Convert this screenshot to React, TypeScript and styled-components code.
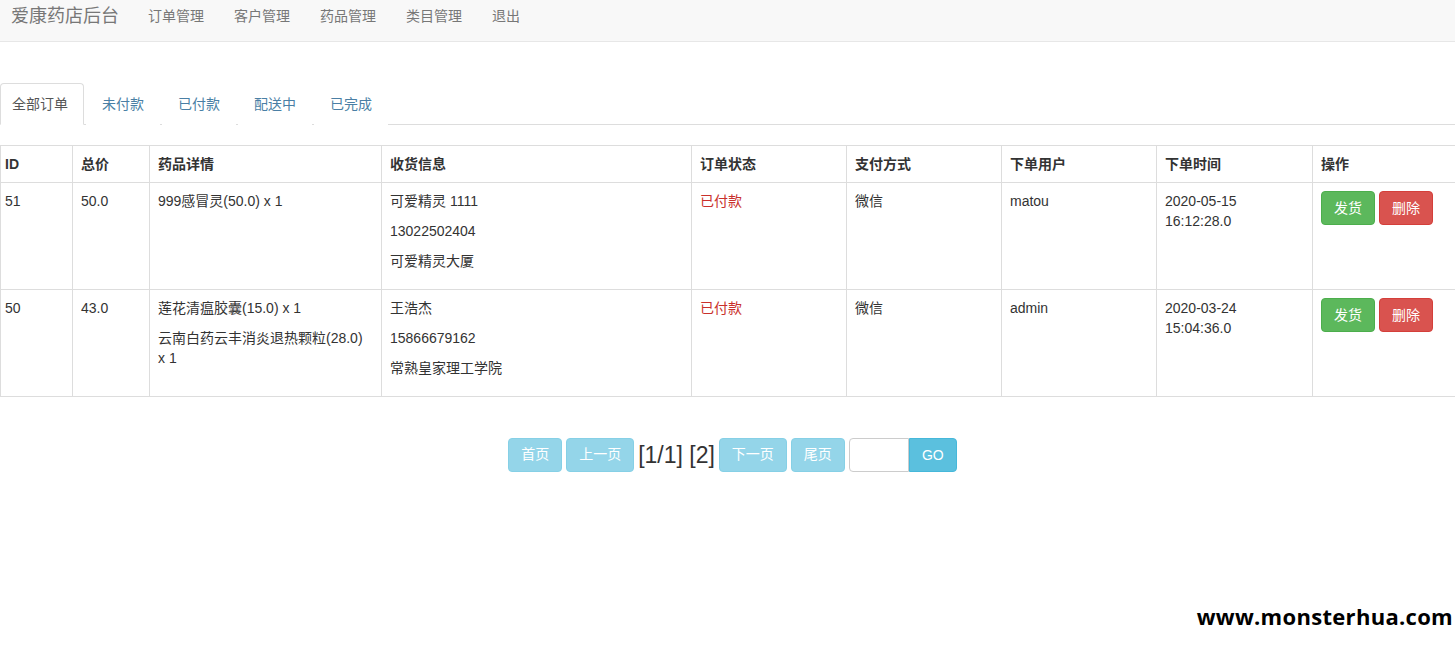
import React from 'react';
import styled, { createGlobalStyle } from 'styled-components';

const Global = createGlobalStyle`
  html, body {
    margin: 0;
    padding: 0;
    background: #fff;
  }
  body {
    font-family: "Liberation Sans", Arial, "Noto Sans CJK SC", sans-serif;
    font-size: 14px;
    line-height: 1.42857;
    color: #333;
  }
`;

const Page = styled.div`
  position: relative;
  width: 1455px;
  height: 646px;
  overflow: hidden;
`;

const Navbar = styled.nav`
  display: flex;
  align-items: center;
  height: 42px;
  box-sizing: border-box;
  background: #f8f8f8;
  border-bottom: 1px solid #e7e7e7;
  padding: 0 0 8px 11px;
`;

const Brand = styled.span`
  font-size: 18px;
  color: #777;
  padding-right: 14px;
`;

const NavLink = styled.a`
  font-size: 14px;
  color: #777;
  padding: 0 15px;
  text-decoration: none;
`;

const Tabs = styled.ul`
  display: flex;
  list-style: none;
  margin: 41px 0 20px;
  padding: 0;
  border-bottom: 1px solid #ddd;
`;

const Tab = styled.li<{ $active?: boolean }>`
  margin-bottom: -1px;
  margin-right: 2px;
  padding: 10px 15px;
  border: 1px solid ${(p) => (p.$active ? '#ddd' : 'transparent')};
  border-bottom-color: ${(p) => (p.$active ? '#fff' : 'transparent')};
  border-radius: 4px 4px 0 0;
  background: #fff;
  color: ${(p) => (p.$active ? '#555' : '#4a7fa5')};
  line-height: 20px;
  &:first-child {
    padding-left: 11px;
  }
`;

const Table = styled.table`
  width: 1455px;
  border-collapse: collapse;
  table-layout: fixed;
  border: 1px solid #ddd;
`;

const Th = styled.th`
  text-align: left;
  font-weight: bold;
  padding: 8px 4px;
  line-height: 20px;
  border: 1px solid #ddd;
  vertical-align: bottom;
  &:not(:first-child) {
    padding-left: 8px;
  }
`;

const Td = styled.td`
  padding: 8px 4px;
  line-height: 20px;
  border: 1px solid #ddd;
  vertical-align: top;
  &:not(:first-child) {
    padding-left: 8px;
  }
`;

const Line = styled.p`
  margin: 0 0 10px;
`;

const Time = styled.span`
  display: block;
  max-width: 110px;
`;

const Status = styled.span`
  color: #c9302c;
`;

const Actions = styled.div`
  display: flex;
  gap: 4px;
`;

const Btn = styled.button<{ $kind: 'success' | 'danger' }>`
  height: 34px;
  padding: 6px 12px;
  font-size: 14px;
  font-family: inherit;
  line-height: 20px;
  color: #fff;
  border-radius: 4px;
  border: 1px solid ${(p) => (p.$kind === 'success' ? '#4cae4c' : '#d43f3a')};
  background: ${(p) => (p.$kind === 'success' ? '#5cb85c' : '#d9534f')};
`;

const Pager = styled.div`
  display: flex;
  justify-content: center;
  align-items: center;
  gap: 4px;
  margin-top: 41px;
  padding-left: 10px;
`;

const PageBtn = styled.button<{ $on?: boolean }>`
  height: 34px;
  padding: 6px 12px;
  font-size: 14px;
  font-family: "Liberation Serif", "Noto Sans CJK SC", serif;
  line-height: 20px;
  color: #fff;
  border: 1px solid #46b8da;
  border-radius: 4px;
  background: #5bc0de;
  opacity: ${(p) => (p.$on ? 1 : 0.65)};
`;

const PageInfo = styled.span`
  font-size: 23px;
  color: #333;
  line-height: 34px;
`;

const PageInput = styled.input`
  width: 60px;
  height: 34px;
  box-sizing: border-box;
  border: 1px solid #ccc;
  border-radius: 4px 0 0 4px;
  margin-right: -4px;
`;

const GoBtn = styled(PageBtn)`
  border-radius: 0 4px 4px 0;
  width: 48px;
  padding: 6px 0;
  font-family: "Liberation Sans", Arial, sans-serif;
`;

const Watermark = styled.div`
  position: absolute;
  right: 0;
  bottom: 0;
  width: 265px;
  height: 58px;
  background: #fff;
  display: flex;
  align-items: center;
  justify-content: flex-end;
  padding-right: 2px;
  font-family: "Open Sans", "DejaVu Sans", sans-serif;
  font-weight: 700;
  font-size: 22px;
  color: #000;
  letter-spacing: 0.3px;
`;

const widths = [72, 77, 232, 310, 155, 155, 155, 156, 143];
const heads = ['ID', '总价', '药品详情', '收货信息', '订单状态', '支付方式', '下单用户', '下单时间', '操作'];

const orders = [
  {
    id: '51',
    total: '50.0',
    items: ['999感冒灵(50.0) x 1'],
    info: ['可爱精灵 1111', '13022502404', '可爱精灵大厦'],
    user: 'matou',
    time: '2020-05-15 16:12:28.0',
  },
  {
    id: '50',
    total: '43.0',
    items: ['莲花清瘟胶囊(15.0) x 1', '云南白药云丰消炎退热颗粒(28.0) x\u00a01'],
    info: ['王浩杰', '15866679162', '常熟皇家理工学院'],
    user: 'admin',
    time: '2020-03-24 15:04:36.0',
  },
];

export default function App() {
  return (
    <Page>
      <Global />
      <Navbar>
        <Brand>爱康药店后台</Brand>
        <NavLink>订单管理</NavLink>
        <NavLink>客户管理</NavLink>
        <NavLink>药品管理</NavLink>
        <NavLink>类目管理</NavLink>
        <NavLink>退出</NavLink>
      </Navbar>
      <Tabs>
        <Tab $active>全部订单</Tab>
        <Tab>未付款</Tab>
        <Tab>已付款</Tab>
        <Tab>配送中</Tab>
        <Tab>已完成</Tab>
      </Tabs>
      <Table>
        <colgroup>
          {widths.map((w, i) => (
            <col key={i} style={{ width: w }} />
          ))}
        </colgroup>
        <thead>
          <tr>
            {heads.map((h) => (
              <Th key={h}>{h}</Th>
            ))}
          </tr>
        </thead>
        <tbody>
          {orders.map((o) => (
            <tr key={o.id}>
              <Td>{o.id}</Td>
              <Td>{o.total}</Td>
              <Td>
                {o.items.map((t) => (
                  <Line key={t}>{t}</Line>
                ))}
              </Td>
              <Td>
                {o.info.map((t) => (
                  <Line key={t}>{t}</Line>
                ))}
              </Td>
              <Td>
                <Status>已付款</Status>
              </Td>
              <Td>微信</Td>
              <Td>{o.user}</Td>
              <Td>
                <Time>{o.time}</Time>
              </Td>
              <Td>
                <Actions>
                  <Btn $kind="success">发货</Btn>
                  <Btn $kind="danger">删除</Btn>
                </Actions>
              </Td>
            </tr>
          ))}
        </tbody>
      </Table>
      <Pager>
        <PageBtn>首页</PageBtn>
        <PageBtn>上一页</PageBtn>
        <PageInfo>[1/1] [2]</PageInfo>
        <PageBtn>下一页</PageBtn>
        <PageBtn>尾页</PageBtn>
        <PageInput />
        <GoBtn $on>GO</GoBtn>
      </Pager>
      <Watermark>www.monsterhua.com</Watermark>
    </Page>
  );
}
